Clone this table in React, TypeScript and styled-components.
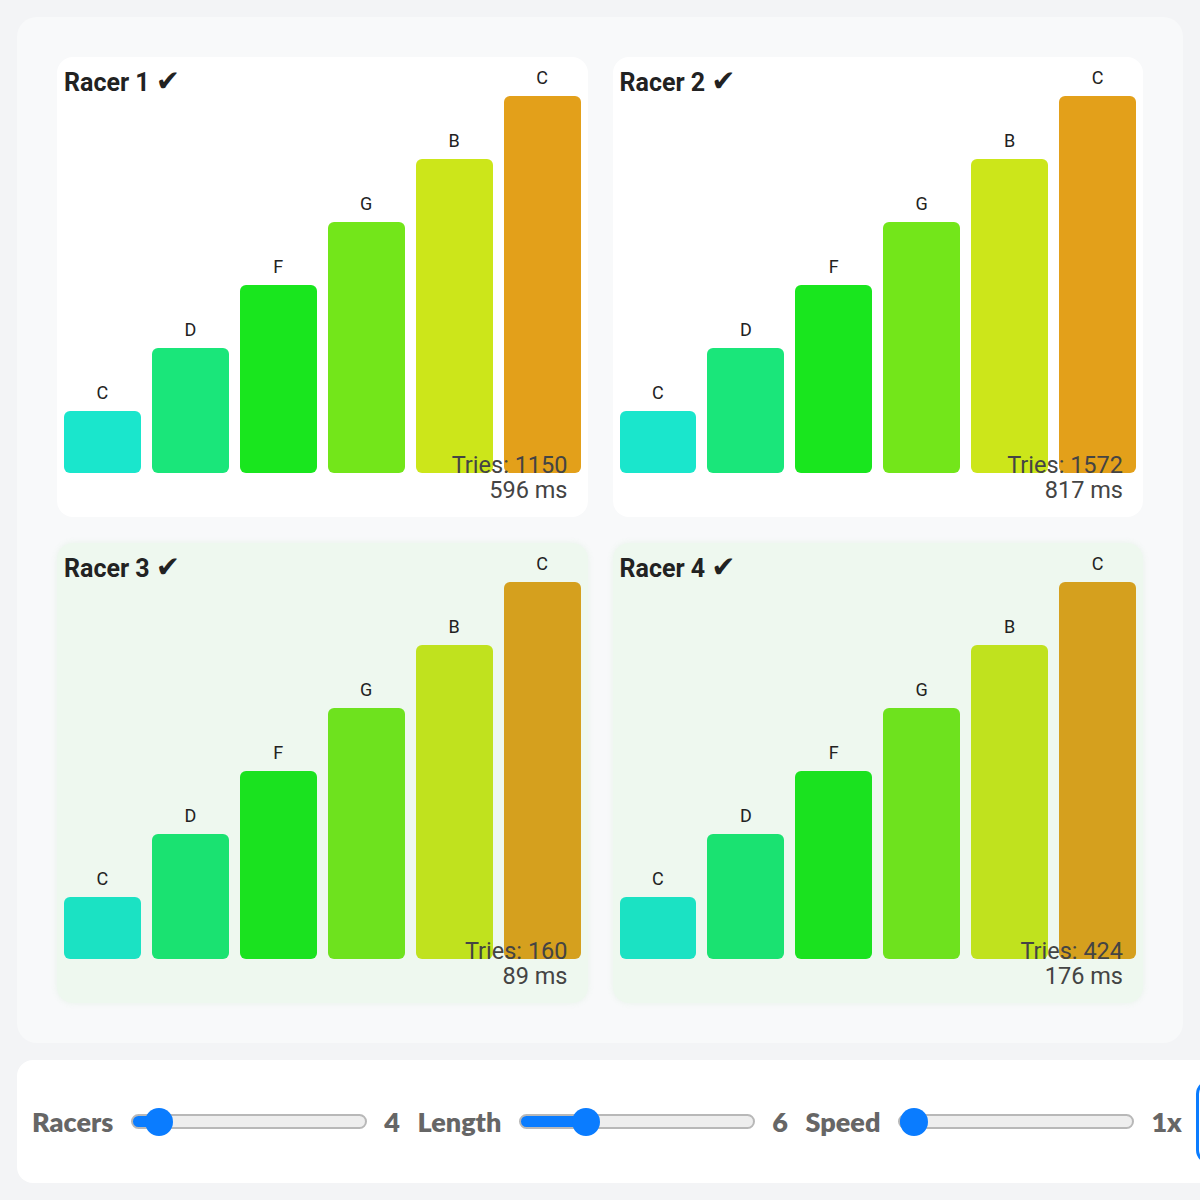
import { useState } from "react";
import styled, { createGlobalStyle } from "styled-components";

type Racer = {
  name: string;
  tries: number;
  ms: number;
  done: boolean;
};

const letters = ["C", "D", "F", "G", "B", "C"];

const normalColors = ["#1ae6cc", "#1ae67a", "#19e61e", "#73e61a", "#cce61a", "#e3a01a"];
const winnerColors = ["#1be2c3", "#1ae271", "#1ae21f", "#6ee21e", "#c0e21e", "#d5a01e"];

const racers: Racer[] = [
  { name: "Racer 1", tries: 1150, ms: 596, done: true },
  { name: "Racer 2", tries: 1572, ms: 817, done: true },
  { name: "Racer 3", tries: 160, ms: 89, done: true },
  { name: "Racer 4", tries: 424, ms: 176, done: true },
];

const GlobalStyle = createGlobalStyle`
  body {
    margin: 0;
    background: #f3f4f6;
    font-family: Roboto, "Liberation Sans", sans-serif;
    overflow: hidden;
  }
`;

export default function App() {
  const [count, setCount] = useState(4);
  const [length, setLength] = useState(6);
  const [speed, setSpeed] = useState(1);

  return (
    <Page>
      <GlobalStyle />
      <Board>
        {racers.map((racer, i) => (
          <RacerCard key={racer.name} racer={racer} winner={i >= 2} />
        ))}
      </Board>
      <Controls>
        <Label>Racers</Label>
        <Slider min={1} max={50} value={count} onChange={setCount} />
        <Value>{count}</Value>
        <Label>Length</Label>
        <Slider min={4} max={12} value={length} onChange={setLength} />
        <Value>{length}</Value>
        <Label>Speed</Label>
        <Slider min={1} max={10} value={speed} onChange={setSpeed} />
        <Value>{speed}x</Value>
        <StartButton aria-label="Start race" />
      </Controls>
    </Page>
  );
}

function RacerCard({ racer, winner }: { racer: Racer; winner: boolean }) {
  const colors = winner ? winnerColors : normalColors;
  return (
    <Card $winner={winner}>
      <Title>
        {racer.name} {racer.done && <Check>✔</Check>}
      </Title>
      <Chart>
        {letters.map((letter, i) => (
          <Column key={i}>
            <BarLabel>{letter}</BarLabel>
            <Bar $color={colors[i]} style={{ height: 62 + i * 63 }} />
          </Column>
        ))}
      </Chart>
      <Stats>
        <StatLine>Tries: {racer.tries}</StatLine>
        <StatLine>{racer.ms} ms</StatLine>
      </Stats>
    </Card>
  );
}

function Slider({
  min,
  max,
  value,
  onChange,
}: {
  min: number;
  max: number;
  value: number;
  onChange: (v: number) => void;
}) {
  const frac = (value - min) / (max - min);
  const pct = ((14 + frac * 204) / 232) * 100;
  return (
    <Range
      type="range"
      min={min}
      max={max}
      value={value}
      $pct={pct}
      onChange={(e) => onChange(Number(e.target.value))}
    />
  );
}

const Page = styled.div`
  padding: 17px;
`;

const Board = styled.div`
  background: #f8f9fa;
  border-radius: 20px;
  padding: 40px;
  display: grid;
  grid-template-columns: 1fr 1fr;
  column-gap: 25px;
  row-gap: 26px;
`;

const Card = styled.div<{ $winner: boolean }>`
  position: relative;
  height: 460px;
  box-sizing: border-box;
  padding: 7px 7px 44px;
  border-radius: 16px;
  background: ${(p) => (p.$winner ? "#eef8ef" : "#ffffff")};
  box-shadow: ${(p) =>
    p.$winner ? "0 0 6px rgba(120, 200, 120, 0.12)" : "none"};
  display: flex;
  flex-direction: column;
  justify-content: flex-end;
`;

const Title = styled.div`
  position: absolute;
  top: 9px;
  left: 7px;
  font-size: 25px;
  line-height: 30px;
  font-weight: 700;
  color: #222;
  display: flex;
  align-items: baseline;
  gap: 6px;
`;

const Check = styled.span`
  font-family: "DejaVu Sans", sans-serif;
  font-size: 29px;
  font-weight: 400;
  line-height: 30px;
`;

const Chart = styled.div`
  display: flex;
  align-items: flex-end;
  gap: 11px;
`;

const Column = styled.div`
  flex: 1;
  display: flex;
  flex-direction: column;
  align-items: stretch;
`;

const BarLabel = styled.div`
  text-align: center;
  font-size: 18px;
  line-height: 21px;
  color: #222;
  margin-bottom: 8px;
`;

const Bar = styled.div<{ $color: string }>`
  background: ${(p) => p.$color};
  border-radius: 6px;
`;

const Stats = styled.div`
  position: absolute;
  right: 20px;
  bottom: 14px;
  text-align: right;
  font-size: 23.5px;
  color: #444;
`;

const StatLine = styled.div`
  height: 25px;
  line-height: 25px;
`;

const Controls = styled.div`
  margin-top: 17px;
  height: 123px;
  box-sizing: border-box;
  width: max-content;
  min-width: 100%;
  padding: 0 15px;
  background: #ffffff;
  border-radius: 16px;
  display: flex;
  align-items: center;
  gap: 17.5px;
  font-family: Lato, "DejaVu Sans", sans-serif;
  font-weight: 800;
  font-size: 27px;
  color: #666;
`;

const Label = styled.span``;

const Value = styled.span`
  min-width: 14px;
`;

const Range = styled.input<{ $pct: number }>`
  appearance: none;
  -webkit-appearance: none;
  width: 236px;
  height: 15px;
  margin: 0;
  box-sizing: border-box;
  border: 2px solid #b8b8b8;
  border-radius: 8px;
  background: linear-gradient(
    to right,
    #0a7cff ${(p) => p.$pct}%,
    #eeeeee ${(p) => p.$pct}%
  );
  outline: none;

  &::-webkit-slider-thumb {
    -webkit-appearance: none;
    appearance: none;
    width: 28px;
    height: 28px;
    border-radius: 50%;
    background: #0a7cff;
    border: none;
    cursor: pointer;
  }
`;

const StartButton = styled.button`
  width: 160px;
  height: 84px;
  margin-left: -3px;
  border: 3px solid #0a7cff;
  border-radius: 14px;
  background: #ffffff;
`;
